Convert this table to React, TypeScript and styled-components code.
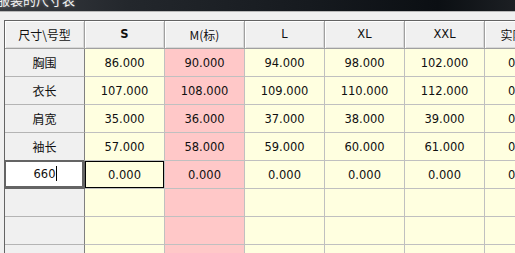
import { Fragment } from 'react';
import styled, { createGlobalStyle } from 'styled-components';

const GlobalStyle = createGlobalStyle`
  html, body {
    margin: 0;
    padding: 0;
    background: #f0f0f0;
    overflow: hidden;
  }
`;

const Window = styled.div`
  display: flex;
  flex-direction: column;
  width: 515px;
  height: 253px;
  overflow: hidden;
  background: #f0f0f0;
`;

const TitleBar = styled.div`
  flex: none;
  height: 11px;
  overflow: hidden;
  background: linear-gradient(90deg, #3a3d42 0%, #23272c 25%, #161a1f 60%, #0b0f13 85%, #1c1f23 100%);
  border-bottom: 1px solid #b8b8b8;
`;

const Caption = styled.div`
  margin: -8px 0 0 -3px;
  font: 13px/16px "Noto Sans CJK SC", sans-serif;
  color: #f4f4f4;
  text-shadow: 0 0 3px rgba(255, 255, 255, 0.35);
  white-space: nowrap;
`;

const Body = styled.div`
  flex: 1;
  padding: 8px 0 0 4px;
  overflow: hidden;
`;

// sheet: fixed 80px columns, 28px rows, each cell draws its own right/bottom line
const Sheet = styled.div`
  display: grid;
  grid-template-columns: repeat(7, 80px);
  grid-auto-rows: 28px;
  width: max-content;
  border-top: 1px solid #646464;
  border-left: 1px solid #646464;
`;

const Cell = styled.div<{ $cjk?: boolean }>`
  position: relative;
  box-sizing: border-box;
  display: flex;
  align-items: center;
  justify-content: center;
  font-family: ${(p) => (p.$cjk ? '"Noto Sans CJK SC", sans-serif' : '"DejaVu Sans", "Noto Sans CJK SC", sans-serif')};
  font-size: ${(p) => (p.$cjk ? '12px' : '11.5px')};
  color: #101010;
  white-space: nowrap;
  overflow: hidden;
`;

const HeadCell = styled(Cell)<{ $active?: boolean }>`
  background: #f0f0f0;
  border-right: 1px solid #a0a0a0;
  border-bottom: 1px solid #a0a0a0;
  box-shadow: inset 1px 1px 0 #ffffff, inset -1px -1px 0 #d8d8d8;
  font-weight: ${(p) => (p.$active ? 700 : 400)};
  padding-bottom: 1px;
`;

const RowHead = styled(Cell)`
  background: #f0f0f0;
  border-right: 1px solid #808080;
  border-bottom: 1px solid #b4b4b4;
`;

const DataCell = styled(Cell)<{ $std?: boolean; $focus?: boolean }>`
  background: ${(p) => (p.$std ? '#ffc8c8' : '#ffffe0')};
  border-right: 1px solid #c0c0c0;
  border-bottom: 1px solid #c0c0c0;
  box-shadow: ${(p) => (p.$focus ? 'inset 0 0 0 1px #000' : 'none')};
`;

const EditCell = styled(Cell)`
  background: #ffffff;
  border-right: 1px solid #646464;
  border-bottom: 1px solid #646464;
  overflow: visible;
  padding: 0 0 2px 2px;

  &::after {
    content: '';
    position: absolute;
    inset: -1px 0 0 -1px;
    border: 2px solid #646464;
    pointer-events: none;
  }
`;

const Caret = styled.span`
  display: inline-block;
  width: 1px;
  height: 15px;
  margin-left: 1px;
  background: #000;
`;

const sizes = ['S', 'M(标)', 'L', 'XL', 'XXL', '实际尺寸'];
const STD = 1;
const ACTIVE = 0;

const measures: [string, number[]][] = [
  ['胸围', [86, 90, 94, 98, 102, 0]],
  ['衣长', [107, 108, 109, 110, 112, 0]],
  ['肩宽', [35, 36, 37, 38, 39, 0]],
  ['袖长', [57, 58, 59, 60, 61, 0]],
];

const hasCjk = (s: string) => /[\u4e00-\u9fff]/.test(s);

export default function App() {
  return (
    <>
      <GlobalStyle />
      <Window>
        <TitleBar>
          <Caption>服装的尺寸表</Caption>
        </TitleBar>
        <Body>
          <Sheet>
            <HeadCell $cjk>尺寸\号型</HeadCell>
            {sizes.map((s, i) => (
              <HeadCell key={s} $cjk={hasCjk(s)} $active={i === ACTIVE}>
                {s}
              </HeadCell>
            ))}

            {measures.map(([name, values]) => (
              <Fragment key={name}>
                <RowHead $cjk>{name}</RowHead>
                {values.map((v, i) => (
                  <DataCell key={i} $std={i === STD}>
                    {v.toFixed(3)}
                  </DataCell>
                ))}
              </Fragment>
            ))}

            <EditCell>
              660
              <Caret />
            </EditCell>
            {sizes.map((s, i) => (
              <DataCell key={'new' + s} $std={i === STD} $focus={i === ACTIVE}>
                0.000
              </DataCell>
            ))}

            {[0, 1, 2].map((r) => (
              <Fragment key={'blank' + r}>
                <RowHead />
                {sizes.map((s, i) => (
                  <DataCell key={s} $std={i === STD} />
                ))}
              </Fragment>
            ))}
          </Sheet>
        </Body>
      </Window>
    </>
  );
}
